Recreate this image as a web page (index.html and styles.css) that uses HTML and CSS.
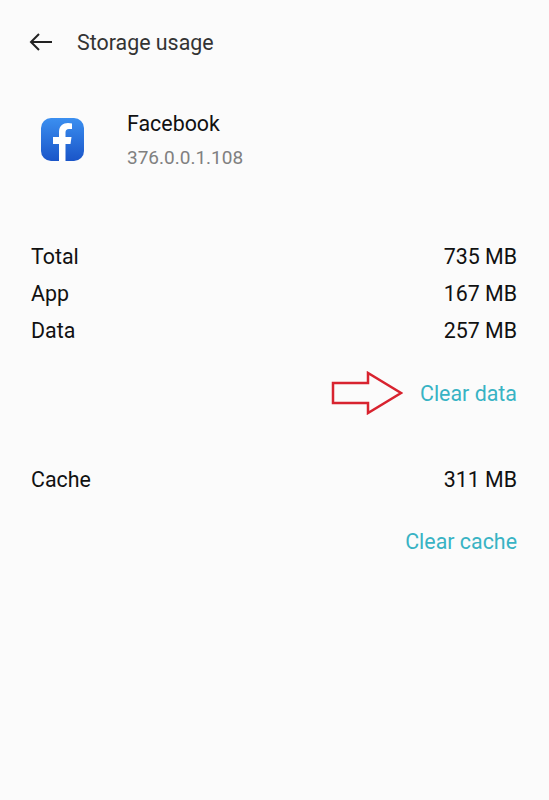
FILE: index.html
```html
<!DOCTYPE html>
<html>
<head>
    <title>Storage usage</title>
    <link rel="stylesheet" href="styles.css">
</head>
<body>
    <div class="header">
        <svg class="back-icon" width="24" height="18" viewBox="0 0 24 18">
            <path d="M10 1 L2 9 L10 17 M2 9 H23" fill="none" stroke="#222" stroke-width="2"/>
        </svg>
        <div class="title">Storage usage</div>
    </div>
    <div class="app-info">
        <svg class="app-icon" width="43" height="43" viewBox="0 0 43 43">
            <defs>
                <linearGradient id="fbBlue" x1="0" y1="0" x2="0" y2="1">
                    <stop offset="0" stop-color="#3b8ff0"/>
                    <stop offset="1" stop-color="#1a55c8"/>
                </linearGradient>
            </defs>
            <rect width="43" height="43" rx="10" fill="url(#fbBlue)"/>
            <path d="M18 43 V26 H12 V19 H18 V14 C18 8 22 5 27 5 C28.500 5 30 5.200 31 5.500 V11 H28 C25.500 11 24.500 12.300 24.500 14.500 V19 H30.500 L29.500 26 H24.500 V43 Z" fill="#fff"/>
        </svg>
        <div class="app-text">
            <div class="app-name">Facebook</div>
            <div class="app-version">376.0.0.1.108</div>
        </div>
    </div>
    <div class="usage">
        <div class="row"><span>Total</span><span>735 MB</span></div>
        <div class="row"><span>App</span><span>167 MB</span></div>
        <div class="row"><span>Data</span><span>257 MB</span></div>
    </div>
    <div class="action action-data">
        <svg class="arrow" width="72" height="44" viewBox="0 0 72 44">
            <path d="M2 12 H37 V2 L70 22 L37 42 V32 H2 Z" fill="none" stroke="#d8232f" stroke-width="2.500"/>
        </svg>
        <span class="link">Clear data</span>
    </div>
    <div class="row cache-row"><span>Cache</span><span>311 MB</span></div>
    <div class="action action-cache">
        <span class="link">Clear cache</span>
    </div>
</body>
</html>
```
FILE: styles.css
```css
body {
    font-family: Roboto, "Liberation Sans", sans-serif;
    margin: 0;
    background: #fbfbfb;
    color: #111;
    font-size: 21.400px;
    min-height: 800px;
}
.header {
    display: flex;
    align-items: center;
    padding: 30px 0 0 29px;
    height: 24px;
}
.title {
    margin-left: 24px;
    color: #333;
}
.app-info {
    display: flex;
    margin-top: 58px;
    padding-left: 41px;
}
.app-icon {
    margin-top: 6px;
}
.app-text {
    margin-left: 43px;
}
.app-name {
    line-height: 24px;
    height: 34px;
}
.app-version {
    color: #808080;
    font-size: 19px;
    line-height: 24px;
}
.usage {
    margin-top: 68px;
}
.row {
    display: flex;
    justify-content: space-between;
    padding: 0 32px 0 31px;
    line-height: 37px;
}
.action {
    display: flex;
    justify-content: flex-end;
    align-items: center;
    padding-right: 32px;
}
.action-data {
    margin-top: 22px;
    height: 44px;
}
.arrow {
    margin-right: 17px;
}
.link {
    color: #38b3c4;
}
.cache-row {
    margin-top: 46px;
}
.action-cache {
    margin-top: 31px;
    height: 24px;
}
```
